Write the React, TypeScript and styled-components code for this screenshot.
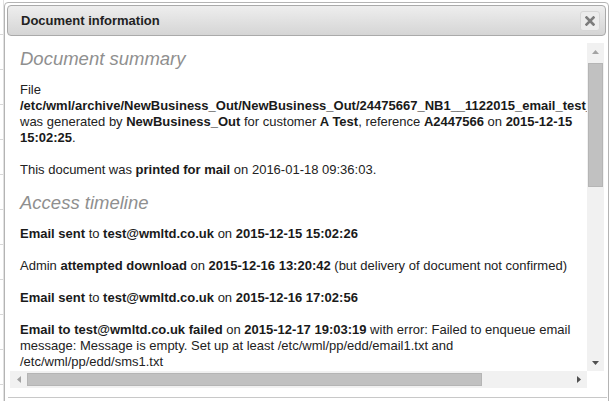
import React from 'react';
import styled, { createGlobalStyle } from 'styled-components';

const GlobalStyle = createGlobalStyle`
  html, body {
    margin: 0;
    padding: 0;
    background: #fff;
  }
  body {
    font-family: "Liberation Sans", Arial, sans-serif;
    overflow: hidden;
  }
`;

const Page = styled.div`
  display: flex;
  width: 611px;
  height: 401px;
  overflow: hidden;
`;

// strip of the page that lies behind the dialog
const Backdrop = styled.div`
  flex: none;
  width: 4px;
  background: repeating-linear-gradient(to bottom, #fff 0 34px, #d8d8d8 34px 35px);
  box-shadow: inset -1px 0 0 #e2e2e2;
`;

const Dialog = styled.div`
  flex: none;
  width: 605px;
  height: 430px;
  margin-top: 2px;
  box-sizing: border-box;
  border: 1px solid #b4b4b4;
  border-radius: 4px;
  padding: 2px;
  background: #fff;
  display: flex;
  flex-direction: column;
`;

const TitleBar = styled.div`
  flex: none;
  height: 31px;
  box-sizing: border-box;
  border: 1px solid #aaa;
  border-radius: 4px;
  background: linear-gradient(to bottom, #eeeeee, #d5d5d5);
  padding: 0 5px 0 13px;
  display: flex;
  align-items: center;
  justify-content: space-between;
`;

const Title = styled.span`
  font-size: 13px;
  font-weight: bold;
  color: #222;
`;

const CloseButton = styled.button`
  width: 20px;
  height: 20px;
  padding: 0;
  box-sizing: border-box;
  border: 1px solid #d6d6d6;
  border-radius: 3px;
  background: #ececec;
  display: flex;
  align-items: center;
  justify-content: center;
  cursor: pointer;
`;

const ContentFrame = styled.div`
  flex: none;
  margin: 7px 2px 0 3px;
  display: grid;
  grid-template-columns: 577px 17px;
  grid-template-rows: 328px 17px;
`;

const Viewport = styled.div`
  overflow: hidden;
  padding: 5px 10px 0;
  color: #222;
`;

const Heading = styled.h2`
  margin: -2px 0 13px;
  font-size: 18.5px;
  font-weight: normal;
  font-style: italic;
  line-height: 21px;
  color: #8f8f8f;
  &:first-child {
    margin-top: 0;
  }
`;

const Para = styled.p`
  margin: 0 0 16px;
  font-size: 13px;
  line-height: 16px;
  b {
    color: #1a1a1a;
  }
`;

const VBar = styled.div`
  background: #f1f1f1;
  display: flex;
  flex-direction: column;
`;

const HBar = styled.div`
  background: #f1f1f1;
  display: flex;
`;

const Corner = styled.div`
  background: #fff;
`;

const ArrowButton = styled.div`
  flex: none;
  width: 17px;
  height: 17px;
  display: flex;
  align-items: center;
  justify-content: center;
`;

const Thumb = styled.div<{ $vertical?: boolean; $offset: number; $length: number }>`
  flex: none;
  box-sizing: border-box;
  background: #c1c1c1;
  border: 1px solid #b5b5b5;
  ${({ $vertical, $offset, $length }) =>
    $vertical
      ? `margin: ${$offset}px 1px 0; height: ${$length}px;`
      : `margin: 2px 0 2px ${$offset}px; width: ${$length}px;`}
`;

const Filler = styled.div`
  flex: 1;
`;

const Footer = styled.div`
  flex: none;
  margin: 9px -1px 0 1px;
  border-top: 1px solid #c8c8c8;
  height: 20px;
`;

type Dir = 'up' | 'down' | 'left' | 'right';

const arrowPoints: Record<Dir, string> = {
  up: '0,4 3.5,0 7,4',
  down: '0,0 7,0 3.5,4',
  left: '4,0 4,7 0,3.5',
  right: '0,0 4,3.5 0,7',
};

const Arrow = ({ dir, disabled }: { dir: Dir; disabled?: boolean }) => {
  const horizontal = dir === 'left' || dir === 'right';
  return (
    <svg width={horizontal ? 4 : 7} height={horizontal ? 7 : 4} viewBox={horizontal ? '0 0 4 7' : '0 0 7 4'}>
      <polygon points={arrowPoints[dir]} fill={disabled ? '#a3a3a3' : '#505050'} />
    </svg>
  );
};

const CloseIcon = () => (
  <svg width="10" height="10" viewBox="0 0 10 10">
    <path d="M1.5 1.5 L8.5 8.5 M8.5 1.5 L1.5 8.5" stroke="#7c7c7c" strokeWidth="2.6" strokeLinecap="square" />
  </svg>
);

export default function App() {
  return (
    <>
      <GlobalStyle />
      <Page>
        <Backdrop />
        <Dialog>
          <TitleBar>
            <Title>Document information</Title>
            <CloseButton aria-label="close">
              <CloseIcon />
            </CloseButton>
          </TitleBar>

          <ContentFrame>
            <Viewport>
              <Heading>Document summary</Heading>
              <Para>
                File <b>/etc/wml/archive/NewBusiness_Out/NewBusiness_Out/24475667_NB1__1122015_email_test_1.pdf</b> was
                generated by <b>NewBusiness_Out</b> for customer <b>A Test</b>, reference <b>A2447566</b> on{' '}
                <b>2015-12-15 15:02:25</b>.
              </Para>
              <Para>
                This document was <b>printed for mail</b> on 2016-01-18 09:36:03.
              </Para>

              <Heading>Access timeline</Heading>
              <Para>
                <b>Email sent</b> to <b>test@wmltd.co.uk</b> on <b>2015-12-15 15:02:26</b>
              </Para>
              <Para>
                Admin <b>attempted download</b> on <b>2015-12-16 13:20:42</b> (but delivery of document not confirmed)
              </Para>
              <Para>
                <b>Email sent</b> to <b>test@wmltd.co.uk</b> on <b>2015-12-16 17:02:56</b>
              </Para>
              <Para>
                <b>Email to test@wmltd.co.uk failed</b> on <b>2015-12-17 19:03:19</b> with error: Failed to enqueue
                email message: Message is empty. Set up at least /etc/wml/pp/edd/email1.txt and
                /etc/wml/pp/edd/sms1.txt
              </Para>
            </Viewport>

            <VBar>
              <ArrowButton>
                <Arrow dir="up" disabled />
              </ArrowButton>
              <Thumb $vertical $offset={3} $length={124} />
              <Filler />
              <ArrowButton>
                <Arrow dir="down" />
              </ArrowButton>
            </VBar>

            <HBar>
              <ArrowButton>
                <Arrow dir="left" disabled />
              </ArrowButton>
              <Thumb $offset={0} $length={455} />
              <Filler />
              <ArrowButton>
                <Arrow dir="right" />
              </ArrowButton>
            </HBar>
            <Corner />
          </ContentFrame>

          <Footer />
        </Dialog>
      </Page>
    </>
  );
}
